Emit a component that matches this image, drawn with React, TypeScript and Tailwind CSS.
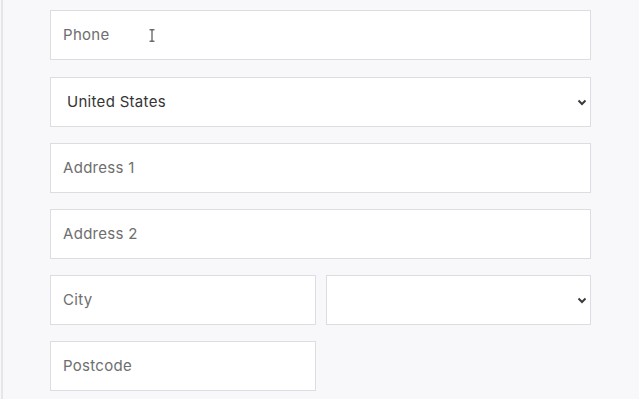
import React from "react";

const inputCls =
  "block h-[50px] w-full border border-[#dcdde1] bg-white px-3 text-[15px] tracking-[0.3px] text-[#353535] placeholder:text-[#6e6e6e] outline-none";

const Chevron = () => (
  <svg
    className="pointer-events-none absolute right-[4px] top-1/2 -translate-y-1/2"
    width="10"
    height="8"
    viewBox="0 0 10 8"
  >
    <path d="M1.5 2.5 L5 6 L8.5 2.5" fill="none" stroke="#3c3c3c" strokeWidth="2" />
  </svg>
);

const App = () => {
  return (
    <div className="min-h-screen bg-[#f8f8fa] pl-px" style={{ fontFamily: "Inter, 'Noto Sans', sans-serif" }}>
      <div className="min-h-screen border-l-2 border-[#e6e6ea] pl-[47px] pt-[10px]">
        <form className="w-[541px]">
          <div className="relative mb-[17px]">
            <input type="text" placeholder="Phone" className={inputCls + " pb-px"} />
            <svg className="absolute left-[99px] top-[19px]" width="6" height="13" viewBox="0 0 6 13">
              <path d="M0.5 0.8 H5.5 M3 0.8 V12.2 M0.5 12.2 H5.5" fill="none" stroke="#333" strokeWidth="1" />
            </svg>
          </div>
          <div className="relative mb-4">
            <select defaultValue="US" className={inputCls + " appearance-none pl-4"}>
              <option value="US">United States</option>
            </select>
            <Chevron />
          </div>
          <input type="text" placeholder="Address 1" className={inputCls + " mb-4 pb-px"} />
          <input type="text" placeholder="Address 2" className={inputCls + " mb-4 pb-px"} />
          <div className="mb-4 flex gap-[10px]">
            <input type="text" placeholder="City" className={inputCls + " !w-[266px] pb-px"} />
            <div className="relative flex-1">
              <select defaultValue="" className={inputCls + " appearance-none"}>
                <option value=""></option>
              </select>
              <Chevron />
            </div>
          </div>
          <input type="text" placeholder="Postcode" className={inputCls + " !w-[266px] pb-px"} />
        </form>
      </div>
    </div>
  );
};

export default App;
